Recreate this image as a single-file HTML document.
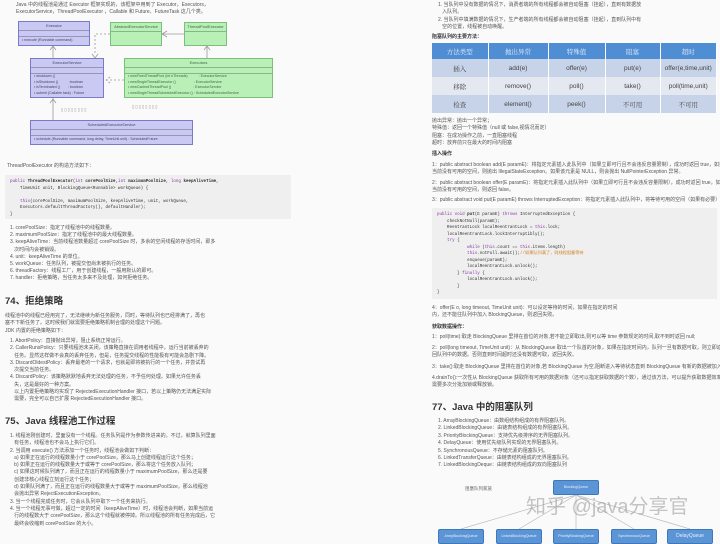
<!DOCTYPE html>
<html><head><meta charset="utf-8"><style>
*{margin:0;padding:0;box-sizing:border-box}
body{width:720px;height:540px;background:#fafafa;position:relative;overflow:hidden;font-family:"Liberation Sans","Noto Sans CJK SC",sans-serif;color:#555;font-size:5px;line-height:7px}
.a{position:absolute;white-space:nowrap}
.b{position:absolute;border:1px solid #7a7ac8;background:#c9c9f3;font-size:3.6px;color:#446;overflow:hidden}
.g{position:absolute;border:1px solid #7ac07a;background:#b8f0b8;font-size:3.6px;color:#464;overflow:hidden}
.b .t,.g .t{text-align:center;height:9px;line-height:8px;border-bottom:1px solid rgba(0,0,0,.25);font-size:4px}
.b .m,.g .m{height:6px;border-bottom:1px solid rgba(0,0,0,.25)}
.code{position:absolute;background:#efefef;font-family:"Liberation Mono",monospace;font-size:4.2px;line-height:6.5px;color:#333;padding:4px 5px;white-space:pre}
.k{color:#8a3aa8}
h2{position:absolute;font-size:9.5px;color:#333;font-weight:bold;white-space:nowrap}
table{position:absolute;left:432px;top:43px;width:285px;border-collapse:collapse;font-size:6.5px;text-align:center}
td{height:18px;border-right:1px solid #fff;color:#444}
th{height:16px;background:#4f8ed2;color:#e8f0ff;font-weight:normal;font-family:"Noto Serif CJK SC",serif;border-right:1px solid #fff}
tr.r1 td{background:#c7d3e8}tr.r2 td{background:#e3e8f1}
.s{font-family:"Noto Serif CJK SC",serif}
.q{position:absolute;background:#5b95d6;border:1px solid #3d78bb;color:#e8f0ff;font-size:3.6px;text-align:center;line-height:13px;height:15px;width:46px;border-radius:2px;overflow:hidden}
</style></head><body>
<div class="a" style="left:16px;top:2px">Java 中的线程池是通过 Executor 框架实现的，该框架中用到了 Executor，Executors，</div>
<div class="a" style="left:16px;top:9px">ExecutorService，ThreadPoolExecutor ，Callable 和 Future、FutureTask 这几个类。</div>

<svg class="a" style="left:0;top:0" width="300" height="160"><g stroke="#999" fill="none" stroke-width="0.8"><path d="M53 46V58M50 50l3-4 3 4" /><path d="M53 98V120M50 103l3-4 3 4"/><path d="M110 34H95V55" stroke-dasharray="2 2"/><path d="M92 54l3 4 3-4"/><path d="M184 34H162M167 31l-5 3 5 3"/><path d="M207 58V46M204 50l3-4 3 4"/><path d="M124 80H106M110 77l-4 3 4 3" stroke-dasharray="2 2"/></g></svg>
<div class="b" style="left:18px;top:21px;width:72px;height:25px"><div class="t">Executor</div><div class="m"></div><div style="padding-left:3px;white-space:nowrap">• execute (Runnable command)</div></div>
<div class="g" style="left:110px;top:22px;width:52px;height:24px"><div class="t">AbstractExecutorService</div></div>
<div class="g" style="left:184px;top:22px;width:43px;height:24px"><div class="t">ThreadPoolExecutor</div></div>
<div class="b" style="left:30px;top:58px;width:74px;height:40px"><div class="t">ExecutorService</div><div class="m"></div><div style="padding-left:3px;line-height:5.5px;white-space:nowrap">• shutdown ()<br>• isShutdown ()&nbsp;&nbsp;&nbsp;&nbsp;&nbsp;&nbsp;&nbsp;&nbsp;&nbsp;&nbsp;&nbsp;:boolean<br>• isTerminated ()&nbsp;&nbsp;&nbsp;&nbsp;&nbsp;&nbsp;&nbsp;&nbsp;: boolean<br>• submit (Callable task) : Future</div></div>
<div class="g" style="left:124px;top:58px;width:149px;height:40px"><div class="t">Executors</div><div class="m"></div><div style="padding-left:3px;line-height:5.5px;white-space:nowrap">• newFixedThreadPool (int nThreads)&nbsp;&nbsp;&nbsp;&nbsp;&nbsp;&nbsp;&nbsp;&nbsp;&nbsp;&nbsp;&nbsp;: ExecutorService<br>• newSingleThreadExecutor ()&nbsp;&nbsp;&nbsp;&nbsp;&nbsp;&nbsp;&nbsp;&nbsp;&nbsp;&nbsp;&nbsp;&nbsp;&nbsp;&nbsp;&nbsp;&nbsp;&nbsp;&nbsp;: ExecutorService<br>• newCachedThreadPool ()&nbsp;&nbsp;&nbsp;&nbsp;&nbsp;&nbsp;&nbsp;&nbsp;&nbsp;&nbsp;&nbsp;&nbsp;&nbsp;&nbsp;&nbsp;&nbsp;&nbsp;&nbsp;&nbsp;&nbsp;&nbsp;&nbsp;: ExecutorService<br>• newSingleThreadScheduledExecutor () : ScheduledExecutorService</div></div>
<div class="a" style="left:61px;top:106px;font-size:4px;color:#888">▯ ▯ ▯ ▯ ▯ ▯ ▯ ▯</div>
<div class="a" style="left:132px;top:103px;font-size:4px;color:#888">▯ ▯ ▯ ▯ ▯ ▯ ▯ ▯</div>
<div class="b" style="left:30px;top:120px;width:163px;height:25px"><div class="t">ScheduledExecutorService</div><div class="m"></div><div style="padding-left:3px;white-space:nowrap">• schedule (Runnable command, long delay, TimeUnit unit) : ScheduledFuture</div></div>

<div class="a" style="left:7px;top:163px">ThreadPoolExecutor 的构造方法如下：</div>
<div class="code" style="left:5px;top:175px;width:286px;height:44px"><span class="k">public</span> <b>ThreadPoolExecutor</b>(<span class="k">int</span> <b>corePoolSize</b>,<span class="k">int</span> <b>maximumPoolSize</b>, <span class="k">long</span> <b>keepAliveTime</b>,
    TimeUnit unit, BlockingQueue&lt;Runnable&gt; workQueue) {

    <span class="k">this</span>(corePoolSize, maximumPoolSize, keepAliveTime, unit, workQueue,
    Executors.defaultThreadFactory(), defaultHandler);
}</div>
<div class="a" style="left:10px;top:225px;line-height:7.2px">1. corePoolSize：指定了线程池中的线程数量。<br>2. maximumPoolSize：指定了线程池中的最大线程数量。<br>3. keepAliveTime：当前线程池数量超过 corePoolSize 时，多余的空闲线程的存活时间，即多<br>&nbsp;&nbsp;&nbsp;次时间内会被销毁。<br>4. unit：keepAliveTime 的单位。<br>5. workQueue：任务队列，被提交但尚未被执行的任务。<br>6. threadFactory：线程工厂，用于创建线程，一般用默认的即可。<br>7. handler：拒绝策略，当任务太多来不及处理，如何拒绝任务。</div>

<h2 style="left:5px;top:298px">74、拒绝策略</h2>
<div class="a" style="left:5px;top:313px;line-height:7.3px">线程池中的线程已经用完了，无法继续为新任务服务，同时，等待队列也已经排满了，再也<br>塞不下新任务了。这时候我们就需要拒绝策略机制合理的处理这个问题。<br>JDK 内置的拒绝策略如下：</div>
<div class="a" style="left:10px;top:338px;line-height:7.3px">1. AbortPolicy：直接抛出异常，阻止系统正常运行。<br>2. CallerRunsPolicy：只要线程池未关闭，该策略直接在调用者线程中，运行当前被丢弃的<br>&nbsp;&nbsp;&nbsp;任务。显然这样做不会真的丢弃任务，但是，任务提交线程的性能极有可能会急剧下降。<br>3. DiscardOldestPolicy：丢弃最老的一个请求，也就是即将被执行的一个任务，并尝试再<br>&nbsp;&nbsp;&nbsp;次提交当前任务。<br>4. DiscardPolicy：该策略默默地丢弃无法处理的任务，不予任何处理。如果允许任务丢<br>&nbsp;&nbsp;&nbsp;失，这是最好的一种方案。<br>&nbsp;&nbsp;&nbsp;以上内置拒绝策略均实现了 RejectedExecutionHandler 接口，若以上策略仍无法满足实际<br>&nbsp;&nbsp;&nbsp;需要，完全可以自己扩展 RejectedExecutionHandler 接口。</div>

<h2 style="left:5px;top:418px">75、Java 线程池工作过程</h2>
<div class="a" style="left:10px;top:433px;line-height:7.3px">1. 线程池刚创建时，里面没有一个线程。任务队列是作为参数传进来的。不过，就算队列里面<br>&nbsp;&nbsp;&nbsp;有任务，线程池也不会马上执行它们。<br>2. 当调用 execute() 方法添加一个任务时，线程池会做如下判断：<br>&nbsp;&nbsp;&nbsp;a) 如果正在运行的线程数量小于 corePoolSize，那么马上创建线程运行这个任务；<br>&nbsp;&nbsp;&nbsp;b) 如果正在运行的线程数量大于或等于 corePoolSize，那么将这个任务放入队列；<br>&nbsp;&nbsp;&nbsp;c) 如果这时候队列满了，而且正在运行的线程数量小于 maximumPoolSize，那么还是要<br>&nbsp;&nbsp;&nbsp;创建非核心线程立刻运行这个任务；<br>&nbsp;&nbsp;&nbsp;d) 如果队列满了，而且正在运行的线程数量大于或等于 maximumPoolSize，那么线程池<br>&nbsp;&nbsp;&nbsp;会抛出异常 RejectExecutionException。<br>3. 当一个线程完成任务时，它会从队列中取下一个任务来执行。<br>4. 当一个线程无事可做，超过一定的时间（keepAliveTime）时，线程池会判断，如果当前运<br>&nbsp;&nbsp;&nbsp;行的线程数大于 corePoolSize，那么这个线程就被停掉。所以线程池的所有任务完成后，它<br>&nbsp;&nbsp;&nbsp;最终会收缩到 corePoolSize 的大小。</div>

<!-- right -->
<div class="a" style="left:438px;top:2px;line-height:7.3px">1. 当队列中没有数据的情况下，消费者端的所有线程都会被自动阻塞（挂起），直到有数据放<br>&nbsp;&nbsp;&nbsp;入队列。<br>2. 当队列中填满数据的情况下，生产者端的所有线程都会被自动阻塞（挂起），直到队列中有<br>&nbsp;&nbsp;&nbsp;空的位置，线程被自动唤醒。</div>
<div class="a" style="left:432px;top:34px;font-weight:bold;color:#333">阻塞队列的主要方法：</div>
<table>
<tr><th style="width:56px">方法类型</th><th style="width:60px">抛出异常</th><th style="width:57px">特殊值</th><th style="width:55px">阻塞</th><th>超时</th></tr>
<tr class="r1"><td class="s">插入</td><td>add(e)</td><td>offer(e)</td><td>put(e)</td><td>offer(e,time,unit)</td></tr>
<tr class="r2"><td class="s">移除</td><td>remove()</td><td>poll()</td><td>take()</td><td>poll(time,unit)</td></tr>
<tr class="r1"><td class="s">检查</td><td>element()</td><td>peek()</td><td class="s">不可用</td><td class="s">不可用</td></tr>
</table>
<div class="a" style="left:432px;top:118px;line-height:7.3px">抛出异常：抛出一个异常；<br>特殊值：返回一个特殊值（null 或 false,视情况而定）<br>阻塞：在成功操作之前，一直阻塞线程<br>超时：放弃前只在最大的时间内阻塞</div>
<div class="a" style="left:432px;top:151px;font-weight:bold;color:#333">插入操作</div>
<div class="a" style="left:432px;top:162px;line-height:7.3px">1：public abstract boolean add(E paramE)：将指定元素插入此队列中（如果立即可行且不会违反容量限制），成功时返回 true，如果<br>当前没有可用的空间，则抛出 IllegalStateException。如果该元素是 NULL，则会抛出 NullPointerException 异常。</div>
<div class="a" style="left:432px;top:180px;line-height:7.3px">2：public abstract boolean offer(E paramE)：将指定元素插入此队列中（如果立即可行且不会违反容量限制），成功时返回 true，如果<br>当前没有可用的空间，则返回 false。</div>
<div class="a" style="left:432px;top:197px">3：public abstract void put(E paramE) throws InterruptedException：将指定元素插入此队列中，将等待可用的空间（如果有必要）</div>
<div class="code" style="left:432px;top:208px;width:285px;height:91px"><span class="k">public void</span> <b>put</b>(E paramE) <span class="k">throws</span> InterruptedException {
    checkNotNull(paramE);
    ReentrantLock localReentrantLock = <span class="k">this</span>.lock;
    localReentrantLock.lockInterruptibly();
    <span class="k">try</span> {
            <span class="k">while</span> (<span class="k">this</span>.count == <span class="k">this</span>.items.length)
            <span class="k">this</span>.notFull.await();<span style="color:#d08020">//如果队列满了，则线程阻塞等待</span>
            enqueue(paramE);
            localReentrantLock.unlock();
        } <span class="k">finally</span> {
            localReentrantLock.unlock();
        }
}</div>
<div class="a" style="left:432px;top:305px;line-height:7.3px">4：offer(E o, long timeout, TimeUnit unit)：可以设定等待的时间，如果在指定的时间<br>内，还不能往队列中加入 BlockingQueue，则返回失败。</div>
<div class="a" style="left:432px;top:324px;font-weight:bold;color:#333">获取数据操作：</div>
<div class="a" style="left:432px;top:334px">1：poll(time):取走 BlockingQueue 里排在首位的对象,若不能立即取出,则可以等 time 参数规定的时间,取不到时返回 null;</div>
<div class="a" style="left:432px;top:345px;line-height:7.3px">2：poll(long timeout, TimeUnit unit)：从 BlockingQueue 取出一个队首的对象，如果在指定时间内，队列一旦有数据可取，则立即返<br>回队列中的数据。否则直到时间超时还没有数据可取，返回失败。</div>
<div class="a" style="left:432px;top:364px">3：take():取走 BlockingQueue 里排在首位的对象,若 BlockingQueue 为空,阻断进入等待状态直到 BlockingQueue 有新的数据被加入。</div>
<div class="a" style="left:432px;top:375px;line-height:7.3px">4.drainTo():一次性从 BlockingQueue 获取所有可用的数据对象（还可以指定获取数据的个数），通过该方法，可以提升获取数据效率；不<br>需要多次分批加锁或释放锁。</div>
<h2 style="left:432px;top:404px">77、Java 中的阻塞队列</h2>
<div class="a" style="left:438px;top:418px;line-height:7.4px">1. ArrayBlockingQueue：由数组结构组成的有界阻塞队列。<br>2. LinkedBlockingQueue：由链表结构组成的有界阻塞队列。<br>3. PriorityBlockingQueue：支持优先级排序的无界阻塞队列。<br>4. DelayQueue：使用优先级队列实现的无界阻塞队列。<br>5. SynchronousQueue：不存储元素的阻塞队列。<br>6. LinkedTransferQueue：由链表结构组成的无界阻塞队列。<br>7. LinkedBlockingDeque：由链表结构组成的双向阻塞队列</div>
<svg class="a" style="left:430px;top:470px" width="290" height="70"><g stroke="#bbb" stroke-width="0.7"><path d="M146 25L31 59M146 25L89 59M146 25V59M146 25L204 59M146 25L260 59"/></g></svg>
<div class="a" style="left:465px;top:485px;font-size:4.5px;color:#666">阻塞队列家族</div>
<div class="q" style="left:553px;top:480px">BlockingQueue</div>
<div class="q" style="left:438px;top:529px">ArrayBlockingQueue</div>
<div class="q" style="left:496px;top:529px">LinkedBlockingQueue</div>
<div class="q" style="left:553px;top:529px">PriorityBlockingQueue</div>
<div class="q" style="left:611px;top:529px">SynchronousQueue</div>
<div class="q" style="left:667px;top:529px;font-size:5px">DelayQueue</div>
<div class="a" style="left:526px;top:495px;font-size:20px;line-height:24px;color:rgba(150,150,150,.55)">知乎 @java分享官</div>
</body></html>
